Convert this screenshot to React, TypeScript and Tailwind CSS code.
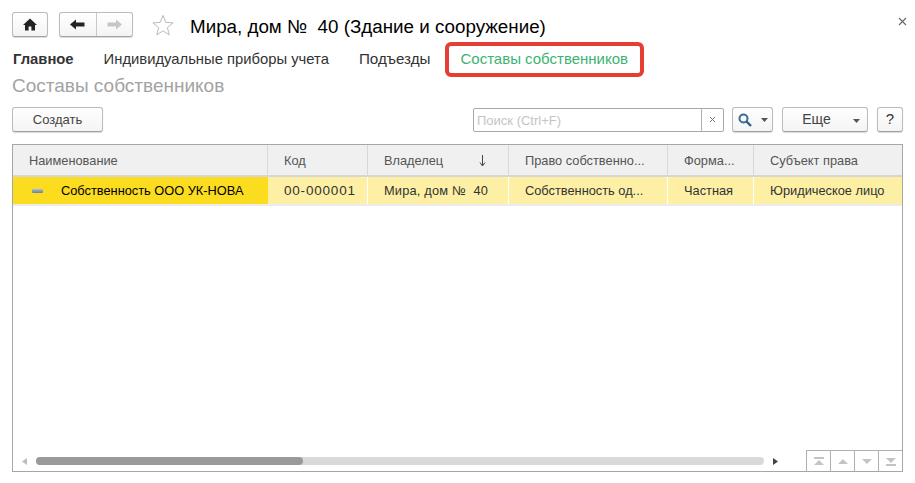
import React from "react";

const btn = "flex items-center justify-center rounded-[3px] border border-[#bcbcbc] border-b-[#a0a0a0] bg-gradient-to-b from-white to-[#f4f4f4] shadow-[0_1px_1px_rgba(0,0,0,0.15)]";

const cols = [
  { w: "w-[255px]", h: "Наименование", c: "Собственность ООО УК-НОВА", t: "" },
  { w: "w-[100px]", h: "Код", c: "00-000001", t: "text-[13.5px] tracking-[0.800px]" },
  { w: "w-[141px]", h: "Владелец", c: "Мира, дом №  40", t: "tracking-[0.200px]" },
  { w: "w-[159px]", h: "Право собственно...", c: "Собственность од...", t: "" },
  { w: "w-[86px]", h: "Форма...", c: "Частная", t: "" },
  { w: "w-[148px]", h: "Субъект права", c: "Юридическое лицо", t: "" },
];

function Caret({ color = "#555" }: { color?: string }) {
  return (
    <svg width="7" height="4" viewBox="0 0 7 4">
      <path d="M0 0h7L3.5 4z" fill={color} />
    </svg>
  );
}

function Tri({ dir, bar }: { dir: "up" | "down"; bar?: boolean }) {
  return (
    <svg width="12" height="9" viewBox="0 0 12 9">
      {dir === "up" ? (
        <>
          {bar && <rect x="1" y="0" width="10" height="2" fill="#c4c4c4" />}
          <path d={bar ? "M1 8h10L6 3z" : "M1 7h10L6 2z"} fill="#c4c4c4" />
        </>
      ) : (
        <>
          <path d={bar ? "M1 1h10L6 6z" : "M1 2h10L6 7z"} fill="#c4c4c4" />
          {bar && <rect x="1" y="7" width="10" height="2" fill="#c4c4c4" />}
        </>
      )}
    </svg>
  );
}

export default function App() {
  return (
    <div className="w-[915px] h-[483px] overflow-hidden bg-white px-[12px] pt-[12px] font-['Liberation_Sans',Arial,sans-serif] text-[#333]">
      {/* Title row */}
      <div className="flex items-center h-[25px]">
        <div className={`${btn} w-[36px] h-[25px]`}>
          <svg width="14" height="13" viewBox="0 0 14 13">
            <path d="M7 0.5L0 7h2v5.5h3.6V8.5h2.8v4H12V7h2z" fill="#222" />
          </svg>
        </div>
        <div className={`${btn} ml-[11px] w-[74px] h-[25px]`}>
          <div className="w-[37px] h-full flex items-center justify-center border-r border-[#c8c8c8]">
            <svg width="15" height="11" viewBox="0 0 15 11">
              <path d="M0 5.5L6 0.5v3h8.5v4H6v3z" fill="#222" />
            </svg>
          </div>
          <div className="w-[36px] h-full flex items-center justify-center">
            <svg width="15" height="11" viewBox="0 0 15 11">
              <path d="M15 5.5L9 0.5v3H0.5v4H9v3z" fill="#c6c6c6" />
            </svg>
          </div>
        </div>
        <svg className="ml-[19px] mt-[1px]" width="22" height="22" viewBox="0 0 24 24">
          <path d="M12 1.5l3 7.6 8 .6-6.200 5.100 2 7.900L12 18.400 5.200 22.700l2-7.900L1 9.700l8-.6z" fill="none" stroke="#b4b4b4" strokeWidth="1" />
        </svg>
        <div className="ml-[16px] pt-[3px] text-[18.8px] leading-[25px] text-black whitespace-pre">Мира, дом №  40 (Здание и сооружение)</div>
        <div className="ml-auto mr-[-4px] mt-[-7px]">
          <svg width="9" height="9" viewBox="0 0 9 9">
            <path d="M1 1l7 7M8 1l-7 7" stroke="#666" strokeWidth="1.100" />
          </svg>
        </div>
      </div>

      {/* Tabs */}
      <div className="flex items-center h-[22px] mt-[11px] text-[14.8px] leading-[22px] whitespace-nowrap">
        <span className="ml-[1px] font-bold text-[#333]">Главное</span>
        <span className="ml-[30px] text-[#333]">Индивидуальные приборы учета</span>
        <span className="ml-[30px] text-[15.2px] text-[#333]">Подъезды</span>
        <span className="relative ml-[30px] text-[15px] text-[#3cb371]">
          Составы собственников
          <span className="absolute left-[-15px] right-[-16px] top-[-6px] bottom-[-7px] rounded-[6px] border-[4px] border-[#e53f33]" />
        </span>
      </div>

      {/* Heading */}
      <div className="mt-[5px] h-[22px] text-[19px] leading-[22px] text-[#a3a3a3]">Составы собственников</div>

      {/* Toolbar */}
      <div className="flex items-center h-[25px] mt-[10px] text-[13px]">
        <div className={`${btn} w-[91px] h-[25px] pt-[1px] text-[#444]`}>Создать</div>
        <div className="ml-[370px] flex h-[24px] w-[251px] rounded-[2px] border border-[#a8a8a8] bg-white">
          <div className="w-[228px] pl-[3px] text-[13px] leading-[24px] text-[#c4c4c4] border-r border-[#b0b0b0]">Поиск (Ctrl+F)</div>
          <div className="flex-1 flex items-center justify-center">
            <svg width="7" height="7" viewBox="0 0 7 7">
              <path d="M1 1l5 5M6 1l-5 5" stroke="#777" strokeWidth="1" />
            </svg>
          </div>
        </div>
        <div className={`${btn} ml-[8px] w-[41px] h-[25px] gap-[9px]`}>
          <svg width="14" height="14" viewBox="0 0 14 14">
            <circle cx="5.500" cy="5.500" r="4" fill="none" stroke="#3d6a94" strokeWidth="2" />
            <path d="M8.500 8.500l4.500 4.500" stroke="#2f5d86" strokeWidth="2.400" />
          </svg>
          <Caret />
        </div>
        <div className={`${btn} relative ml-[9px] w-[86px] h-[25px] text-[14px] text-[#444]`}>
          <span className="mr-[17px]">Еще</span>
          <span className="absolute right-[7px] top-[11px] flex"><Caret /></span>
        </div>
        <div className={`${btn} ml-[9px] w-[26px] h-[25px] text-[15px] text-[#333]`}>?</div>
      </div>

      {/* Table */}
      <div className="mt-[12px] w-[891px] h-[328px] border border-[#a6a6a6] flex flex-col text-[12.8px] bg-white">
        <div className="flex h-[30px] bg-[#f0f0f0] border-b-2 border-[#d6d6d6] shrink-0 box-content">
          {cols.map((c, i) => (
            <div key={c.h} className={`${c.w} pl-[16px] relative shrink-0 leading-[32px] text-[#555] whitespace-nowrap border-r border-[#d8d8d8] ${i === 5 ? "border-r-0" : ""}`}>
              {c.h}
              {i === 2 && (
                <svg className="absolute left-[111px] top-[10px]" width="7" height="12" viewBox="0 0 7 12">
                  <path d="M3.500 0v10M1 7.500l2.500 3.500 2.500-3.500" fill="none" stroke="#444" strokeWidth="1" />
                </svg>
              )}
            </div>
          ))}
        </div>
        <div className="flex h-[27px] border-b-2 border-[#ececec] shrink-0 box-content">
          {cols.map((c, i) => (
            <div key={c.h} className={`${c.w} pl-[16px] pt-[1px] shrink-0 flex items-center whitespace-pre text-[#333] border-r border-white ${c.t} ${i === 0 ? "bg-[#fbdc1e] text-black border-r-0" : "bg-[#fdf0a4]"} ${i === 5 ? "border-r-0" : ""}`}>
              {i === 0 && (
                <span className="w-[11px] h-[4px] mr-[18px] ml-[3px] rounded-[1px] bg-gradient-to-b from-[#a8c0d8] to-[#6d7f96]" />
              )}
              {c.c}
            </div>
          ))}
        </div>
        <div className="flex-1" />
        <div className="flex items-end h-[34px] shrink-0">
          <div className="flex items-center h-[22px] flex-1 pl-[9px] pt-[2px] self-end">
            <svg width="5" height="7" viewBox="0 0 5 7"><path d="M5 0v7L0 3.500z" fill="#bdbdbd" /></svg>
            <div className="ml-[9px] w-[728px] h-[8px] rounded-full bg-[#d9d9d9]">
              <div className="w-[267px] h-full rounded-full bg-[#9a9a9a]" />
            </div>
            <svg className="ml-[9px]" width="5" height="7" viewBox="0 0 5 7"><path d="M0 0v7l5-3.500z" fill="#444" /></svg>
          </div>
          <div className="flex h-[21px] w-[96px] border-t border-l border-[#b0b0b0] shrink-0">
            <div className="flex-1 flex items-center justify-center border-r border-[#b0b0b0]"><Tri dir="up" bar /></div>
            <div className="flex-1 flex items-center justify-center border-r border-[#b0b0b0]"><Tri dir="up" /></div>
            <div className="flex-1 flex items-center justify-center border-r border-[#b0b0b0]"><Tri dir="down" /></div>
            <div className="flex-1 flex items-center justify-center"><Tri dir="down" bar /></div>
          </div>
        </div>
      </div>
    </div>
  );
}
